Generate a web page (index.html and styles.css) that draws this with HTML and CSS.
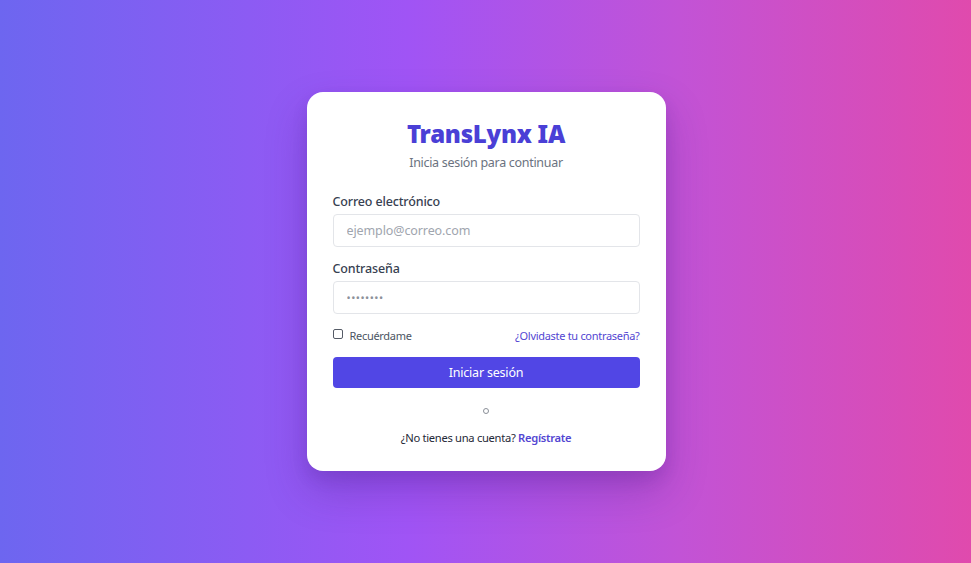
FILE: index.html
```html
<!DOCTYPE html>
<html lang="es">
<head>
<meta charset="utf-8">
<title>TransLynx IA</title>
<link rel="stylesheet" href="styles.css">
</head>
<body>
<main class="page">
  <section class="card">
    <h1 class="title">TransLynx IA</h1>
    <p class="subtitle">Inicia sesión para continuar</p>
    <form class="form">
      <div class="field">
        <label class="label" for="email">Correo electrónico</label>
        <input class="input" id="email" type="email" placeholder="ejemplo@correo.com">
      </div>
      <div class="field">
        <label class="label" for="pass">Contraseña</label>
        <input class="input input-pass" id="pass" type="password" placeholder="••••••••">
      </div>
      <div class="row">
        <label class="remember"><input class="check" type="checkbox"><span>Recuérdame</span></label>
        <a class="link" href="#">¿Olvidaste tu contraseña?</a>
      </div>
      <button class="btn" type="button">Iniciar sesión</button>
    </form>
    <div class="spinner-wrap"><span class="spinner"></span></div>
    <p class="signup">¿No tienes una cuenta? <a class="link strong" href="#">Regístrate</a></p>
  </section>
</main>
</body>
</html>
```
FILE: styles.css
```css
* { box-sizing: border-box; }
html, body { margin: 0; padding: 0; }
body {
  font-family: "Noto Sans", "Open Sans", sans-serif;
  background: linear-gradient(90deg, #6d66f0 0%, #a054f5 42%, #c253d6 70%, #e04aad 100%);
  min-height: 563px;
}
.page {
  height: 563px;
  display: flex;
  align-items: center;
  justify-content: center;
  padding-left: 1px;
}
.card {
  width: 359px;
  background: #fff;
  border-radius: 16px;
  padding: 26px 26px 24px;
  box-shadow: 0 20px 40px rgba(60, 20, 120, 0.25), 0 8px 16px rgba(60, 20, 120, 0.12);
}
.title {
  margin: 0;
  text-align: center;
  font-size: 24px;
  line-height: 32px;
  font-weight: 900;
  color: #4a3fd6;
  letter-spacing: -0.25px;
}
.subtitle {
  margin: 3px 0 0;
  text-align: center;
  font-size: 12.5px;
  line-height: 20px;
  color: #6b7280;
  letter-spacing: -0.3px;
}
.form {
  margin-top: 20px;
  display: flex;
  flex-direction: column;
  gap: 13px;
}
.field { display: flex; flex-direction: column; }
.label {
  font-size: 12.5px;
  line-height: 18px;
  font-weight: 500;
  color: #374151;
  margin-bottom: 3px;
  letter-spacing: -0.15px;
}
.input {
  height: 33px;
  border: 1px solid #e3e5e9;
  border-radius: 4px;
  padding: 0 13px;
  font-family: inherit;
  font-size: 12.5px;
  color: #374151;
  outline: none;
  letter-spacing: -0.1px;
}
.input::placeholder { color: #a0a5ae; }
.input-pass::placeholder { color: #8c919a; letter-spacing: 0.5px; font-size: 11px; }
.row {
  display: flex;
  justify-content: space-between;
  align-items: center;
  height: 18px;
  margin-top: -1px;
}
.remember {
  display: flex;
  align-items: center;
  gap: 7px;
  font-size: 11px;
  color: #4b5563;
  letter-spacing: -0.3px;
}
.check {
  appearance: none;
  -webkit-appearance: none;
  margin: 0;
  width: 10px;
  height: 10px;
  border: 1px solid #555b66;
  border-radius: 2px;
  background: #fff;
  position: relative;
  top: -1px;
}
.link {
  color: #5346d2;
  text-decoration: none;
  font-size: 11px;
  letter-spacing: -0.3px;
}
.strong { font-weight: 600; font-size: 11.2px; }
.btn {
  margin-top: 0;
  height: 31px;
  border: none;
  border-radius: 4px;
  background: #5146e5;
  color: #fff;
  font-family: inherit;
  font-size: 12.5px;
  font-weight: 400;
  letter-spacing: -0.2px;
}
.spinner-wrap {
  margin-top: 20px;
  display: flex;
  justify-content: center;
  height: 6px;
}
.spinner {
  width: 6px;
  height: 6px;
  border: 1px solid #8a8f98;
  border-radius: 50%;
}
.signup {
  margin: 15px 0 0;
  text-align: center;
  font-size: 11.2px;
  line-height: 18px;
  color: #1f2937;
  letter-spacing: -0.3px;
}
```
